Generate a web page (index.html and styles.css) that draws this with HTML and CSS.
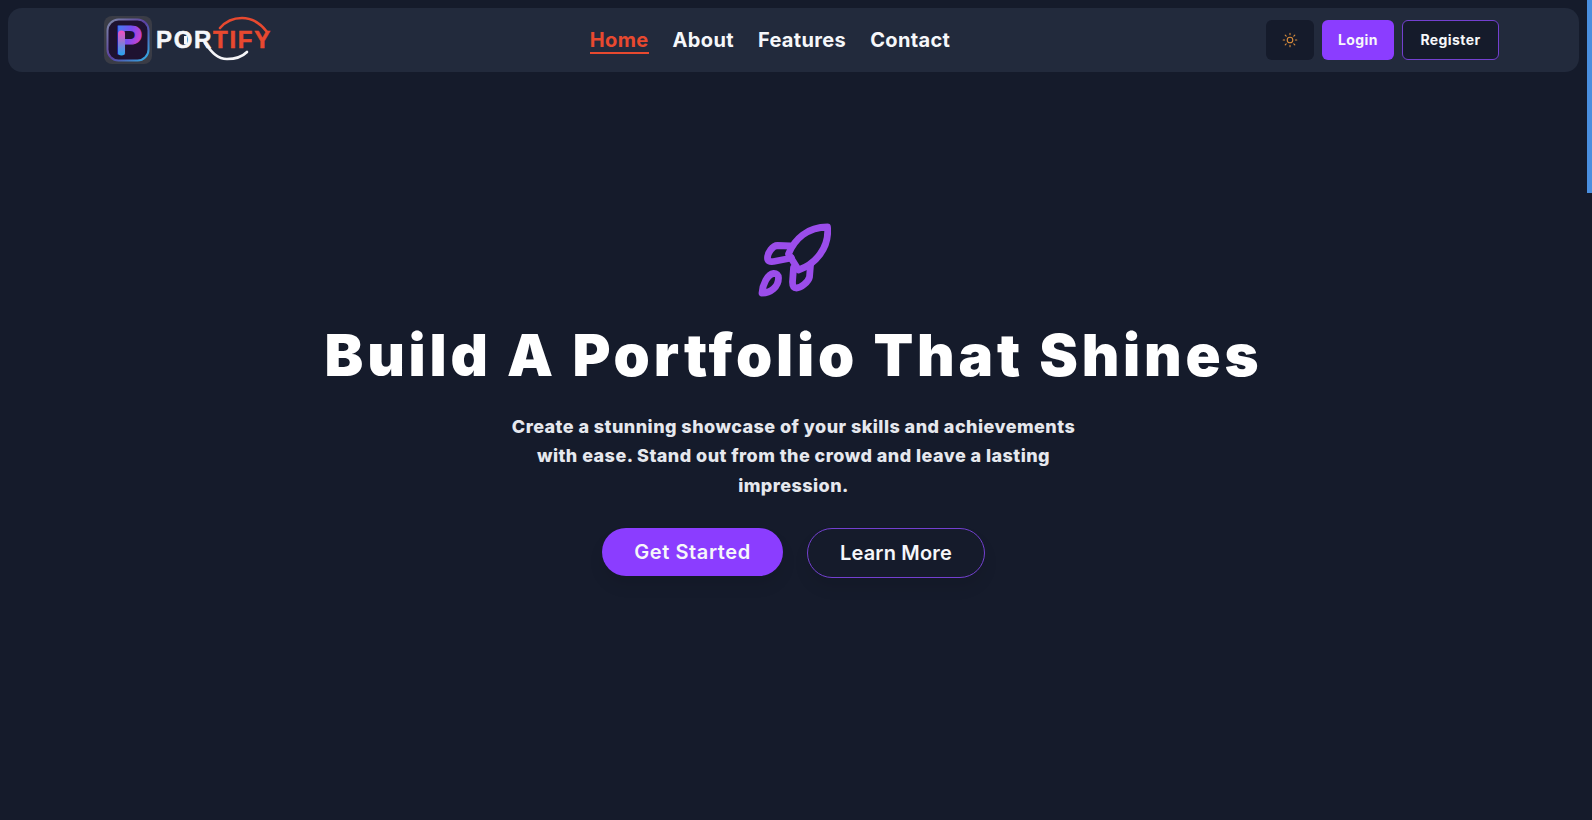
FILE: index.html
```html
<!DOCTYPE html>
<html lang="en">
<head>
    <meta charset="UTF-8">
    <meta name="viewport" content="width=device-width, initial-scale=1.0">
    <title>Portify</title>
    <link rel="stylesheet" href="styles.css">
</head>
<body>
    <div class="page">
        <nav class="navbar">
            <a class="brand" href="#">
                <svg class="brand-icon" viewBox="0 0 48 48" width="48" height="48">
                    <defs>
                        <linearGradient id="markGrad" x1="0" y1="0" x2="1" y2="0.6">
                            <stop offset="0" stop-color="#2f8df0"/>
                            <stop offset="0.55" stop-color="#7a4cf0"/>
                            <stop offset="1" stop-color="#e03fc8"/>
                        </linearGradient>
                        <linearGradient id="stemGrad" gradientUnits="userSpaceOnUse" x1="0" y1="15" x2="0" y2="39">
                            <stop offset="0" stop-color="#f04fc0"/>
                            <stop offset="1" stop-color="#27a4ee"/>
                        </linearGradient>
                        <linearGradient id="ringGrad" x1="0" y1="0" x2="1" y2="1">
                            <stop offset="0" stop-color="#7f8aa8"/>
                            <stop offset="0.5" stop-color="#5a3fa0"/>
                            <stop offset="1" stop-color="#30b0e8"/>
                        </linearGradient>
                    </defs>
                    <rect width="48" height="48" rx="8" fill="#3a3c46"/>
                    <rect x="3.5" y="3.5" width="41" height="41" rx="11" fill="#1e1230" stroke="url(#ringGrad)" stroke-width="2"/>
                    <text class="mark-letter" x="25" y="38" text-anchor="middle" fill="url(#markGrad)" stroke="url(#markGrad)" stroke-width="1">P</text>
                    <path d="M17.5 18V36" fill="none" stroke="url(#stemGrad)" stroke-width="7" stroke-linecap="round"/>
                </svg>
                <svg class="brand-word" viewBox="0 0 118 48" width="118" height="48">
                    <path d="M64 12C70 5 78 2 86 2C96 2 105 8 111 16" fill="none" stroke="#e8492f" stroke-width="2.6" stroke-linecap="round"/>
                    <path d="M49 27C56 37 62 43 71 43C80 43 87 40 91 36" fill="none" stroke="#f4f5f8" stroke-width="2.6" stroke-linecap="round"/>
                    <text class="word" x="0" y="32"><tspan fill="#f6f7fa" stroke="#f6f7fa">POR</tspan><tspan fill="#e8492f" stroke="#e8492f">TIFY</tspan></text>
                    <rect x="28" y="20" width="3" height="8" fill="#f6f7fa"/>
                </svg>
            </a>
            <ul class="nav-links">
                <li><a class="active" href="#">Home</a></li>
                <li><a href="#">About</a></li>
                <li><a href="#">Features</a></li>
                <li><a href="#">Contact</a></li>
            </ul>
            <div class="nav-actions">
                <button class="theme-btn" aria-label="Toggle theme">
                    <svg viewBox="0 0 16 16" width="16" height="16" fill="none" stroke="#dd8f3c" stroke-width="1.1" stroke-linecap="round">
                        <circle cx="8" cy="8" r="2.8"/>
                        <path d="M8 1.2v1.4M8 13.4v1.4M1.2 8h1.4M13.4 8h1.4M3.2 3.2l1 1M11.8 11.8l1 1M3.2 12.8l1-1M11.8 4.2l1-1"/>
                    </svg>
                </button>
                <button class="btn-login">Login</button>
                <button class="btn-register">Register</button>
            </div>
        </nav>

        <main class="hero">
            <svg class="rocket" viewBox="16.5 12 74 76" width="74" height="76" fill="none" stroke="#9b4deb" stroke-width="6.8" stroke-linejoin="round" stroke-linecap="round">
                <path d="M87 17C67 17 54 29 48 44L58 60C75 54 89 38 87 17Z"/>
                <path d="M50 36L37 35.5C32 35.5 27 43 27 48C27 51 29 52 33 51.5L51 48"/>
                <path d="M70 55L69 67C68 72 60 78 56 78C53 78 52 76 52 72L53 58"/>
                <path d="M33 63.5C27 64 22 75 21.5 83C30 83 38 77 38 68C38 65 36 63.3 33 63.5Z"/>
            </svg>
            <h1>Build A Portfolio That Shines</h1>
            <p>Create a stunning showcase of your skills and achievements with ease. Stand out from the crowd and leave a lasting impression.</p>
            <div class="hero-actions">
                <a class="cta cta-primary" href="#">Get Started</a>
                <a class="cta cta-outline" href="#">Learn More</a>
            </div>
        </main>
    </div>
    <div class="scrollbar">
        <div class="scroll-thumb"></div>
    </div>
</body>
</html>
```

FILE: styles.css
```css
* {
    box-sizing: border-box;
}

body {
    display: flex;
    height: 100vh;
    margin: 0;
    overflow: hidden;
    background: #151b2b;
    font-family: Inter, "Noto Sans", sans-serif;
    color: #f6f7fa;
}

a {
    color: inherit;
    text-decoration: none;
}

.page {
    flex: 1;
    padding: 8px;
}

.scrollbar {
    width: 5px;
}

.scroll-thumb {
    height: 193px;
    background: #4a8fdf;
}

.navbar {
    display: flex;
    justify-content: space-between;
    align-items: center;
    height: 64px;
    padding: 0 80px 0 96px;
    background: #222a3c;
    border-radius: 14px;
}

.brand {
    display: flex;
    align-items: center;
    gap: 4px;
}

.brand-icon,
.brand-word {
    display: block;
    overflow: visible;
}

.mark-letter {
    font-family: "Liberation Sans", sans-serif;
    font-size: 40px;
    font-weight: 700;
}

.word {
    font-family: "Liberation Sans", sans-serif;
    font-size: 24px;
    font-weight: 700;
    letter-spacing: 1.7px;
    stroke-width: 0.5px;
}

.nav-links {
    display: flex;
    gap: 24px;
    margin: 0;
    padding: 0;
    list-style: none;
    font-size: 20px;
    font-weight: 700;
    letter-spacing: 0.35px;
}

.nav-links a {
    display: block;
    padding-top: 2px;
    line-height: 24px;
}

.nav-links a.active {
    color: #e8492f;
    border-bottom: 2px solid #e8492f;
}

.nav-actions {
    display: flex;
    gap: 8px;
}

.nav-actions button {
    height: 40px;
    padding: 0 0 2px;
    border-radius: 6px;
    font-family: inherit;
    font-size: 14px;
    font-weight: 700;
    letter-spacing: 0.4px;
    color: #f6f7fa;
    cursor: pointer;
}

.nav-actions .theme-btn {
    display: flex;
    justify-content: center;
    align-items: center;
    width: 48px;
    padding: 0;
    background: #151b2b;
    border: none;
}

.btn-login {
    width: 72px;
    background: #8b3dff;
    border: none;
}

.btn-register {
    width: 97px;
    background: #151b2b;
    border: 1px solid #7340d0;
}

.hero {
    display: flex;
    flex-direction: column;
    align-items: center;
    padding-top: 150px;
}

.rocket {
    display: block;
}

h1 {
    margin: 21px 0 0;
    font-size: 58px;
    font-weight: 900;
    line-height: 72px;
    letter-spacing: 3.8px;
    color: #fff;
}

.hero p {
    width: 576px;
    margin: 21px 0 0;
    font-size: 18px;
    font-weight: 800;
    line-height: 29.25px;
    letter-spacing: 0.45px;
    text-align: center;
    color: #e6e8ee;
}

.hero-actions {
    display: flex;
    align-items: flex-start;
    gap: 24px;
    margin-top: 28px;
}

.cta {
    display: block;
    padding: 12px 0;
    border-radius: 999px;
    font-size: 20px;
    font-weight: 600;
    line-height: 24px;
    letter-spacing: 0.6px;
    text-align: center;
    box-shadow: 0 10px 15px rgba(0, 0, 0, 0.08);
}

.cta-primary {
    width: 181px;
    background: #8b3dff;
}

.cta-outline {
    width: 178px;
    border: 1px solid #7340d0;
    letter-spacing: 0.2px;
}
```
